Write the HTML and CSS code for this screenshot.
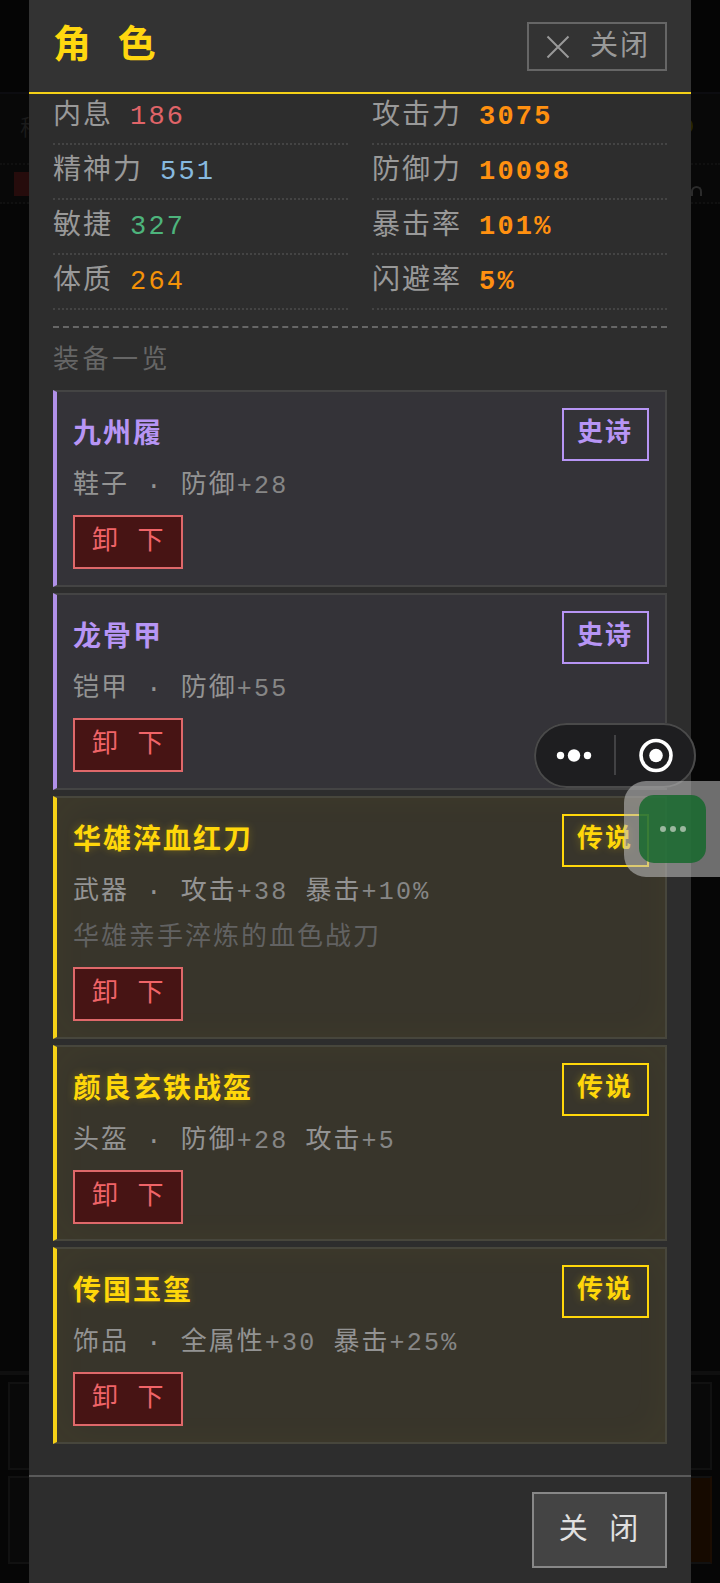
FILE: index.html
```html
<!DOCTYPE html>
<html lang="zh-CN">
<head>
<meta charset="utf-8">
<title>角色</title>
<link rel="stylesheet" href="styles.css">
</head>
<body>
<div class="backdrop">
  <div class="bd-top"></div>
  <div class="bd-info"><span>称</span><i></i></div>
  <div class="bd-bar"><b></b><u></u></div>
  <div class="bd-space"></div>
  <div class="bd-menu"><div></div><div class="hot"></div></div>
</div>
<main class="panel">
  <header class="head">
    <h1>角 色</h1>
    <button class="close-top"><svg width="24" height="24" viewBox="0 0 24 24"><path d="M1.5 1.5L22.5 22.5M22.5 1.5L1.5 22.5"/></svg>关闭</button>
  </header>
  <section class="body">
    <div class="stats">
      <div class="stat">内息<span class="num red">186</span></div>
      <div class="stat">攻击力<span class="num strong">3075</span></div>
      <div class="stat">精神力<span class="num blue">551</span></div>
      <div class="stat">防御力<span class="num strong">10098</span></div>
      <div class="stat">敏捷<span class="num green">327</span></div>
      <div class="stat">暴击率<span class="num strong">101%</span></div>
      <div class="stat">体质<span class="num orange">264</span></div>
      <div class="stat">闪避率<span class="num strong">5%</span></div>
    </div>
    <h2>装备一览</h2>
    <div class="gear">
      <article class="card epic">
        <div class="info"><h3>九州履</h3><p>鞋子 · 防御<span>+28</span></p><button class="off">卸 下</button></div>
        <span class="badge">史诗</span>
      </article>
      <article class="card epic">
        <div class="info"><h3>龙骨甲</h3><p>铠甲 · 防御<span>+55</span></p><button class="off">卸 下</button></div>
        <span class="badge">史诗</span>
      </article>
      <article class="card legend tall">
        <div class="info"><h3>华雄淬血红刀</h3><p>武器 · 攻击<span>+38</span> 暴击<span>+10%</span></p><p class="lore">华雄亲手淬炼的血色战刀</p><button class="off">卸 下</button></div>
        <span class="badge">传说</span>
      </article>
      <article class="card legend short">
        <div class="info"><h3>颜良玄铁战盔</h3><p>头盔 · 防御<span>+28</span> 攻击<span>+5</span></p><button class="off">卸 下</button></div>
        <span class="badge">传说</span>
      </article>
      <article class="card legend">
        <div class="info"><h3>传国玉玺</h3><p>饰品 · 全属性<span>+30</span> 暴击<span>+25%</span></p><button class="off">卸 下</button></div>
        <span class="badge">传说</span>
      </article>
    </div>
  </section>
  <footer class="foot"><button class="close-bottom">关 闭</button></footer>
</main>
<div class="capsule">
  <svg width="162" height="65" viewBox="0 0 162 65">
    <g fill="#fff"><circle cx="26.5" cy="32.5" r="3.7"/><circle cx="40" cy="32.5" r="6.2"/><circle cx="53.5" cy="32.5" r="3.7"/><circle cx="122" cy="32.5" r="6.8"/></g>
    <circle cx="122" cy="32.5" r="15" fill="none" stroke="#fff" stroke-width="3.6"/>
    <path d="M81 12V52" stroke="#4c4c4e" stroke-width="1.6"/>
  </svg>
</div>
<div class="float"><div class="bubble"><i></i><i></i><i></i></div></div>
</body>
</html>
```
FILE: styles.css
```css
* { box-sizing: border-box; margin: 0; padding: 0; }
body {
  position: relative;
  width: 720px;
  height: 1583px;
  overflow: hidden;
  background: #060606;
  color: #999;
  font-family: "Liberation Mono", "Noto Sans CJK SC", monospace;
  font-size: 28px;
  letter-spacing: 2px;
}
button { font: inherit; letter-spacing: inherit; color: inherit; background: none; border: 0; white-space: nowrap; }

.backdrop { position: absolute; inset: 0; display: flex; flex-direction: column; }
.bd-top { height: 94px; border-bottom: 2px solid #0c0c10; background: #050505; }
.bd-info { height: 71px; border-bottom: 2px dotted #101010; background: #080808; display: flex; justify-content: space-between; align-items: center; padding: 0 27px 6px 20px; font-size: 22px; color: #1b1b1b; }
.bd-info i { width: 10px; height: 14px; border-radius: 50%; background: #2a2500; }
.bd-bar { height: 39px; border-bottom: 2px dotted #101010; background: #080808; display: flex; justify-content: space-between; align-items: center; padding: 0 18px 0 14px; }
.bd-bar b { width: 30px; height: 24px; background: #260c0c; }
.bd-bar u { width: 11px; height: 10px; margin-top: 15px; border: 2px solid #2b2b2b; border-bottom: 0; border-radius: 6px 6px 0 0; }
.bd-space { height: 1167px; }
.bd-menu { height: 212px; border-top: 4px solid #0f0f0f; padding: 7px 8px; display: flex; flex-direction: column; gap: 6px; }
.bd-menu div { height: 88px; border: 2px solid #111; background: #090909; }
.bd-menu .hot { background: linear-gradient(90deg, #090909 50%, #160a00 50%); border-right-color: #1c0d02; }

.panel { position: relative; width: 662px; height: 1583px; margin-left: 29px; background: #2d2d2d; display: flex; flex-direction: column; }
.head { height: 94px; flex: none; border-bottom: 2px solid #f5d117; background: #333; display: flex; justify-content: space-between; align-items: flex-start; padding: 22px 24px 0; }
.head h1 { font-size: 38px; line-height: 44px; color: #ffd70f; letter-spacing: 3px; word-spacing: -2px; padding-top: 3px; }
.close-top { width: 140px; height: 49px; border: 2px solid #666; padding-left: 17px; display: flex; align-items: center; line-height: 40px; padding-top: 2px; }
.close-top svg { margin: -2px 20px 0 0; flex: none; }
.close-top path { stroke: #999; stroke-width: 2; }

.body { flex: none; height: 1381px; padding: 0 24px; }
.stats { display: grid; grid-template-columns: 1fr 1fr; grid-template-rows: 51px 55px 55px 55px; column-gap: 24px; height: 234px; border-bottom: 2px dashed #666; }
.stat { border-bottom: 2px dotted #444; line-height: 40px; padding-top: 7px; white-space: nowrap; }
.stat:nth-child(-n+2) { padding-top: 3px; }
.num { margin-left: 17px; font-size: 27px; letter-spacing: 2.2px; }
.red { color: #e06468; }
.blue { color: #87b9df; }
.green { color: #4db47c; }
.orange { color: #f39208; }
.strong { color: #ff9010; font-weight: bold; }
.body h2 { font-size: 26px; font-weight: normal; color: #666; letter-spacing: 3.5px; height: 62px; line-height: 60px; padding-top: 3px; }

.gear { display: flex; flex-direction: column; gap: 6px; }
.card { height: 197px; display: flex; justify-content: space-between; align-items: flex-start; padding: 16px; border: 2px solid #444; border-left-width: 4px; background: #343338; }
.card.tall { height: 243px; }
.card.short { height: 196px; }
.epic { border-left-color: #b090e8; color: #b795f5; }
.legend { border-color: #47463c; border-left-color: #f5d117; background: #38352b; box-shadow: inset 0 0 40px rgba(255, 215, 0, .035); color: #ffd70a; }
.legend h3, .legend .badge { text-shadow: 0 0 8px rgba(255, 215, 0, .3); }
.info { display: flex; flex-direction: column; align-items: flex-start; }
.info h3 { font-size: 28px; line-height: 50px; height: 53px; padding-top: 3px; }
.info p { font-size: 26px; line-height: 46px; height: 46px; padding-top: 2px; color: #939393; white-space: nowrap; word-spacing: -.5px; }
.info p span { font-size: 25px; letter-spacing: 2.2px; color: #868686; }
.info .lore { color: #626262; }
.off { width: 110px; height: 54px; margin-top: 8px; border: 2px solid #df686a; background: #471414; color: #f06468; font-size: 26px; line-height: 46px; padding: 1px 0 1px 17px; text-align: left; }
.badge { width: 87px; height: 53px; border: 2px solid currentColor; font-size: 26px; font-weight: bold; line-height: 48px; padding-left: 13px; }

.foot { flex: none; height: 108px; border-top: 2px solid #5a5a5a; padding: 15px 24px 0; display: flex; justify-content: flex-end; align-items: flex-start; }
.close-bottom { width: 135px; height: 76px; border: 2px solid #888; background: #444; color: #e0e0e0; font-size: 29px; padding: 0 0 7px 0; }

.capsule { position: absolute; left: 534px; top: 723px; width: 162px; height: 65px; border-radius: 33px; background: #1e1e20; box-shadow: inset 0 0 0 2px #4a4a4a; }
.capsule svg { display: block; }
.float { position: absolute; left: 624px; top: 781px; width: 96px; height: 96px; border-radius: 22px 0 0 22px; background: rgba(192, 192, 192, .56); padding: 14px 0 0 15px; }
.bubble { width: 67px; height: 68px; border-radius: 15px; background: rgba(16, 104, 40, .8); display: flex; align-items: center; justify-content: center; gap: 4px; }
.bubble i { width: 6px; height: 6px; border-radius: 50%; background: #9bb79f; }
```
